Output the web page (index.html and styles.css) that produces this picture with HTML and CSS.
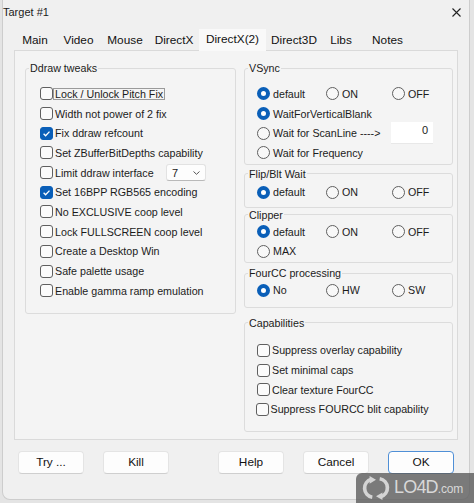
FILE: index.html
```html
<!DOCTYPE html>
<html>
<head>
<meta charset="utf-8">
<title>Target #1</title>
<link rel="stylesheet" href="styles.css">
</head>
<body>
<div class="window">
  <div class="titlebar">
    <span class="title">Target #1</span>
    <svg class="close" width="9" height="9" viewBox="0 0 9 9"><path d="M0.5 0.5 L8.5 8.5 M8.5 0.5 L0.5 8.5" stroke="#222" stroke-width="1.1" fill="none"/></svg>
  </div>
  <div class="tabs">
    <div class="tab w-main">Main</div>
    <div class="tab w-video">Video</div>
    <div class="tab w-mouse">Mouse</div>
    <div class="tab w-dx">DirectX</div>
    <div class="tab w-dx2 selected">DirectX(2)</div>
    <div class="tab w-d3d">Direct3D</div>
    <div class="tab w-libs">Libs</div>
    <div class="tab w-notes">Notes</div>
  </div>
  <div class="panel">
    <fieldset class="group ddraw">
      <legend>Ddraw tweaks</legend>
      <div class="gbody">
        <div class="row"><span class="cb"></span><span class="focus">Lock / Unlock Pitch Fix</span></div>
        <div class="row"><span class="cb"></span><span>Width not power of 2 fix</span></div>
        <div class="row"><span class="cb on"><svg viewBox="0 0 13 13" width="13" height="13"><polyline points="3.6,6.8 5.6,8.8 9.5,4.6" fill="none" stroke="#fff" stroke-width="1.3"/></svg></span><span>Fix ddraw refcount</span></div>
        <div class="row"><span class="cb"></span><span>Set ZBufferBitDepths capability</span></div>
        <div class="row"><span class="cb"></span><span>Limit ddraw interface</span>
          <span class="combo"><span>7</span><svg width="7" height="4" viewBox="0 0 7 4"><polyline points="0.5,0.5 3.5,3.3 6.5,0.5" fill="none" stroke="#555" stroke-width="1"/></svg></span>
        </div>
        <div class="row"><span class="cb on"><svg viewBox="0 0 13 13" width="13" height="13"><polyline points="3.6,6.8 5.6,8.8 9.5,4.6" fill="none" stroke="#fff" stroke-width="1.3"/></svg></span><span>Set 16BPP RGB565 encoding</span></div>
        <div class="row"><span class="cb"></span><span>No EXCLUSIVE coop level</span></div>
        <div class="row"><span class="cb"></span><span>Lock FULLSCREEN coop level</span></div>
        <div class="row"><span class="cb"></span><span>Create a Desktop Win</span></div>
        <div class="row"><span class="cb"></span><span>Safe palette usage</span></div>
        <div class="row"><span class="cb"></span><span>Enable gamma ramp emulation</span></div>
      </div>
    </fieldset>
    <div class="rightcol">
      <fieldset class="group vsync">
        <legend>VSync</legend>
        <div class="gbody radios">
          <div class="opt"><span class="rb on"></span>default</div>
          <div class="opt"><span class="rb"></span>ON</div>
          <div class="opt"><span class="rb"></span>OFF</div>
          <div class="opt span3"><span class="rb on"></span>WaitForVerticalBlank</div>
          <div class="opt span2"><span class="rb"></span>Wait for ScanLine ----&gt;</div>
          <div class="opt"><span class="edit">0</span></div>
          <div class="opt span3"><span class="rb"></span>Wait for Frequency</div>
        </div>
      </fieldset>
      <fieldset class="group flip">
        <legend>Flip/Blt Wait</legend>
        <div class="gbody radios">
          <div class="opt"><span class="rb on"></span>default</div>
          <div class="opt"><span class="rb"></span>ON</div>
          <div class="opt"><span class="rb"></span>OFF</div>
        </div>
      </fieldset>
      <fieldset class="group clipper">
        <legend>Clipper</legend>
        <div class="gbody radios">
          <div class="opt"><span class="rb on"></span>default</div>
          <div class="opt"><span class="rb"></span>ON</div>
          <div class="opt"><span class="rb"></span>OFF</div>
          <div class="opt"><span class="rb"></span>MAX</div>
        </div>
      </fieldset>
      <fieldset class="group fourcc">
        <legend>FourCC processing</legend>
        <div class="gbody radios">
          <div class="opt"><span class="rb on"></span>No</div>
          <div class="opt"><span class="rb"></span>HW</div>
          <div class="opt"><span class="rb"></span>SW</div>
        </div>
      </fieldset>
      <fieldset class="group caps">
        <legend>Capabilities</legend>
        <div class="gbody">
          <div class="row"><span class="cb"></span><span>Suppress overlay capability</span></div>
          <div class="row"><span class="cb"></span><span>Set minimal caps</span></div>
          <div class="row"><span class="cb"></span><span>Clear texture FourCC</span></div>
          <div class="row shift"><span class="cb"></span><span>Suppress FOURCC blit capability</span></div>
        </div>
      </fieldset>
    </div>
  </div>
  <div class="buttons">
    <div class="btn">Try ...</div>
    <div class="btn">Kill</div>
    <div class="btn push">Help</div>
    <div class="btn">Cancel</div>
    <div class="btn default">OK</div>
  </div>
</div>
<div class="watermark">
  <svg class="wm-icon" width="30" height="24" viewBox="0 0 32 26">
    <path d="M12 23 A10 10 0 0 1 11 3.5" fill="none" stroke="#d4d4d4" stroke-width="4"/>
    <polygon points="9,0 16,4 9,8.5" fill="#d4d4d4"/>
    <path d="M20 3 A10 10 0 0 1 21 22.5" fill="none" stroke="#d4d4d4" stroke-width="4"/>
    <polygon points="23,18 16,22 23,26" fill="#d4d4d4"/>
  </svg>
  <span class="wm-text">LO4D<span class="wm-com">.com</span></span>
</div>
</body>
</html>
```
FILE: styles.css
```css
* { box-sizing: border-box; }
html, body { margin: 0; padding: 0; }
body {
  width: 474px;
  height: 503px;
  overflow: hidden;
  position: relative;
  background: #e4e4e4;
  font-family: "Liberation Sans", Arial, sans-serif;
  font-size: 10.7px;
  color: #1b1b1b;
}
.window {
  margin-left: 2px;
  width: 468px;
  height: 500px;
  background: #f0f0f0;
  border: 1px solid #cdcdcd;
  border-top: none;
  border-radius: 0 0 8px 8px;
}
.titlebar {
  height: 28px;
  display: flex;
  justify-content: space-between;
  align-items: flex-start;
  padding-top: 6px;
}
.title { font-size: 11px; line-height: 13px; }
.close { margin-top: 2px; margin-right: 8px; }

.tabs {
  height: 22px;
  display: flex;
  align-items: flex-end;
  padding-left: 11px;
}
.tab {
  height: 19px;
  line-height: 19px;
  text-align: center;
  font-size: 11.8px;
  color: #111;
}
.tab.selected {
  height: 22px;
  line-height: 20px;
  margin-bottom: -1px;
  background: #f9f9f9;
  position: relative;
  z-index: 1;
}
.w-main { width: 42px; }
.w-video { width: 45px; }
.w-mouse { width: 48px; }
.w-dx { width: 50px; }
.w-dx2 { width: 67px; }
.w-d3d { width: 56px; }
.w-libs { width: 38px; }
.w-notes { width: 55px; }

.panel {
  margin-left: 11px;
  width: 444px;
  height: 390px;
  border: 1px solid #dadada;
  background: #f4f4f4;
  display: grid;
  grid-template-columns: 211px 209px;
  column-gap: 8px;
  align-items: start;
  padding: 10px 4px 0 10px;
}
.group {
  margin: 0;
  padding: 0;
  min-width: 0;
  border: 1px solid #dcdcdc;
  border-radius: 3px;
}
.group legend {
  margin-left: 3px;
  padding: 0 1px;
  line-height: 14px;
  font-size: 10.7px;
}
.rightcol { display: flex; flex-direction: column; }

.ddraw .gbody { padding: 9px 0 12px 14px; }
.vsync .gbody { padding: 9px 0 1px 12px; }
.flip { margin-top: 2px; }
.flip .gbody { padding: 1.5px 0 5px 12px; }
.clipper .gbody { padding: 0 0 1px 12px; }
.fourcc { margin-top: 3px; }
.fourcc .gbody { padding: 0 0 6.5px 12px; }
.caps { margin-top: 8px; }
.caps .gbody { padding: 11px 0 11.5px 12px; }

.row {
  height: 19.7px;
  display: flex;
  align-items: center;
  white-space: nowrap;
}
.row.shift { margin-left: -1.5px; }
.cb {
  width: 13px;
  height: 13px;
  flex: none;
  border: 1px solid #5f5f5f;
  border-radius: 3px;
  background: #fbfbfb;
  margin-right: 2px;
  display: flex;
}
.cb.on { background: #0a5fb8; border-color: #0a5fb8; }
.cb svg { margin: -1px; }
.focus {
  margin-left: -2px;
  padding: 0 1px 0 1px;
  border: 1px solid #9a9a9a;
  line-height: 10px;
  height: 12px;
  display: inline-block;
}
.combo {
  margin-left: auto;
  margin-right: 29px;
  width: 40px;
  height: 17px;
  background: #fdfdfd;
  border: 1px solid #e2e2e2;
  border-bottom-color: #b9b9b9;
  border-radius: 3px;
  display: flex;
  align-items: center;
  justify-content: space-between;
  padding: 0 5px 0 5px;
  font-size: 11px;
}

.radios {
  display: grid;
  grid-template-columns: 69px 66px 1fr;
  grid-auto-rows: 19.7px;
}
.opt {
  display: flex;
  align-items: center;
  white-space: nowrap;
}
.span2 { grid-column: span 2; }
.span3 { grid-column: span 3; }
.rb {
  width: 13px;
  height: 13px;
  flex: none;
  border-radius: 50%;
  border: 1px solid #5f5f5f;
  background: #f8f8f8;
  margin-right: 3px;
}
.rb.on {
  border: 4px solid #0a5fb8;
  background: #ffffff;
}
.edit {
  margin: -1.2px 0 -1.2px -1px;
  width: 42px;
  height: 22px;
  background: #ffffff;
  text-align: right;
  padding-right: 5px;
  line-height: 16px;
  font-size: 11px;
  border-bottom: 1px solid #e8e8e8;
}

.buttons {
  margin-top: 11px;
  display: flex;
  gap: 19px;
  padding-left: 15px;
}
.btn {
  width: 66px;
  height: 23px;
  line-height: 21px;
  text-align: center;
  font-size: 11.8px;
  background: #fdfdfd;
  border: 1px solid #e4e4e4;
  border-bottom-color: #cfcfcf;
  border-radius: 4px;
  color: #111;
}
.btn.push { margin-left: 30px; }
.btn.default { border: 1px solid #4f8fd6; box-shadow: inset 0 0 0 1px #ffffff; }

.watermark {
  position: absolute;
  left: 356px;
  top: 473px;
  width: 118px;
  height: 30px;
  background: rgba(95, 95, 95, 0.82);
  border-radius: 6px 0 0 0;
  display: flex;
  align-items: center;
  padding-left: 5px;
  overflow: hidden;
}
.wm-icon { flex: none; }
.wm-text {
  margin-left: 3px;
  font-size: 18px;
  line-height: 20px;
  color: #d8d8d8;
  letter-spacing: -0.8px;
  white-space: nowrap;
}
.wm-com { font-size: 12px; letter-spacing: -0.2px; }
```
